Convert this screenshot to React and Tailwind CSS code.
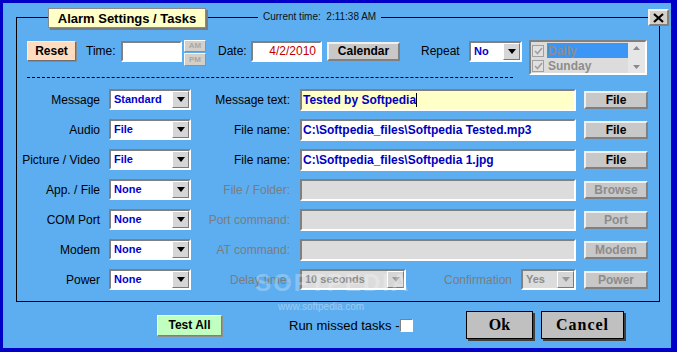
import React from "react";

const sunken =
  "border-2 border-t-[#808080] border-l-[#808080] border-b-white border-r-white";
const raised =
  "border-2 border-t-[#f0f0f0] border-l-[#f0f0f0] border-b-[#808080] border-r-[#808080]";

const Arrow = ({ dim }) => (
  <div className="w-[17px] h-full bg-[#d6d6d6] border border-t-white border-l-white border-b-[#7a7a7a] border-r-[#7a7a7a] flex items-center justify-center">
    <svg width="8" height="5" viewBox="0 0 8 5">
      <polygon points="0,0 8,0 4,5" fill={dim ? "#9a9a9a" : "#000"} />
    </svg>
  </div>
);

const Sel = ({ w, value, dim }) => (
  <div
    className={`${w} h-[21px] flex items-center ${sunken} ${
      dim ? "bg-[#dcdcdc]" : "bg-white"
    }`}
  >
    <span
      className={`flex-1 pl-[3px] text-[11px] font-bold leading-none ${
        dim ? "text-[#8c8c8c]" : "text-[#0000d0]"
      }`}
    >
      {value}
    </span>
    <Arrow dim={dim} />
  </div>
);

const Btn = ({ label, dim }) => (
  <div
    className={`w-[64px] h-[18px] ml-[8px] bg-[#c8c8c8] ${raised} flex items-center justify-center text-[12px] font-bold leading-none ${
      dim ? "text-[#8c8c8c]" : "text-black"
    }`}
  >
    {label}
  </div>
);

const Field = ({ value, yellow, dim }) => (
  <div
    className={`w-[276px] h-[22px] ml-[10px] ${sunken} flex items-center ${
      yellow ? "bg-[#ffffc8]" : dim ? "bg-[#dcdcdc]" : "bg-white"
    }`}
  >
    <span className="pl-[1px] text-[12px] font-bold text-[#0000c0] leading-none">
      {value}
    </span>
    {yellow && <span className="w-px h-[14px] bg-black" />}
  </div>
);

const rows = [
  { label: "Message", sel: "Standard", right: "Message text:", value: "Tested by Softpedia", yellow: true, btn: "File" },
  { label: "Audio", sel: "File", right: "File name:", value: "C:\\Softpedia_files\\Softpedia Tested.mp3", btn: "File" },
  { label: "Picture / Video", sel: "File", right: "File name:", value: "C:\\Softpedia_files\\Softpedia 1.jpg", btn: "File" },
  { label: "App. / File", sel: "None", right: "File / Folder:", dim: true, btn: "Browse" },
  { label: "COM Port", sel: "None", right: "Port command:", dim: true, btn: "Port" },
  { label: "Modem", sel: "None", right: "AT command:", dim: true, btn: "Modem" },
];

export default function App() {
  return (
    <div className="w-[677px] h-[352px] bg-[#0000c8] pt-[3px] pl-[3px] pr-[6px] pb-[4px] font-['Liberation_Sans',Arial,sans-serif] text-black">
      <div className="h-full bg-[#5daef0] pl-[13px] pt-[14px] relative">
        <div className="w-[644px] h-[285px] border border-black relative">
          {/* title */}
          <div className="absolute left-[31px] top-[-10px] w-[158px] h-[20px] bg-[#ffffc8] border border-[#8a8a8a] shadow-[2px_2px_0_#7a7a7a] flex items-center justify-center text-[13px] font-bold leading-none">
            Alarm Settings / Tasks
          </div>
          <div className="absolute left-[241px] top-[-7px] px-[5px] bg-[#5daef0] text-[10px] leading-[12px] text-[#101010]">
            Current time:&nbsp; 2:11:38 AM
          </div>
          <div className={`absolute left-[631px] top-[-9px] w-[21px] h-[17px] bg-[#d4d0c8] ${raised} flex items-center justify-center`}>
            <svg width="11" height="10" viewBox="0 0 11 10">
              <path d="M1 1 L10 9 M10 1 L1 9" stroke="#000" strokeWidth="2.2" />
            </svg>
          </div>

          {/* top row */}
          <div className="pt-[22px]">
            <div className="h-[22px] flex items-center pl-[10px] text-[12px]">
              <div className="w-[49px] h-[20px] bg-[#ffdcc0] border border-t-[#f8f0e8] border-l-[#f8f0e8] border-b-[#707070] border-r-[#707070] shadow-[1px_1px_0_#8a8a8a] flex items-center justify-center font-bold leading-none">
                Reset
              </div>
              <span className="w-[35px] ml-[10px]">Time:</span>
              <div className={`w-[61px] h-[21px] bg-white ${sunken}`} />
              <div className="ml-[2px] w-[22px] self-start flex flex-col gap-[1px]">
                <div className="h-[12px] bg-[#d4d0c8] border border-t-white border-l-white border-b-[#909090] border-r-[#909090] flex items-center justify-center text-[8px] font-bold text-[#a8a8a8] leading-none">
                  AM
                </div>
                <div className="h-[13px] bg-[#d4d0c8] border border-t-white border-l-white border-b-[#909090] border-r-[#909090] flex items-center justify-center text-[8px] font-bold text-[#a8a8a8] leading-none">
                  PM
                </div>
              </div>
              <span className="w-[33px] ml-[12px]">Date:</span>
              <div className={`w-[71px] h-[21px] bg-white ${sunken} flex items-center justify-end pr-[4px] text-[12px] text-[#c00000] leading-none`}>
                4/2/2010
              </div>
              <div className={`w-[73px] h-[19px] ml-[5px] bg-[#c8c8c8] ${raised} flex items-center justify-center font-bold leading-none`}>
                Calendar
              </div>
              <span className="w-[48px] ml-[21px]">Repeat</span>
              <Sel w="w-[53px]" value="No" />
              <div className={`ml-[7px] w-[118px] h-[35px] self-start bg-[#dcdcdc] ${sunken} flex`}>
                <div className="flex-1 flex flex-col pt-[1px]">
                  {["Daily", "Sunday"].map((d, i) => (
                    <div key={d} className="h-[15px] flex items-center">
                      <div className="w-[12px] h-[12px] ml-[1px] border border-[#a0a0a0] bg-[#e0e0e0] flex items-center justify-center">
                        <svg width="9" height="8" viewBox="0 0 9 8">
                          <path d="M1 4 L3.5 6.5 L8 1" stroke="#a0a0a0" strokeWidth="1.6" fill="none" />
                        </svg>
                      </div>
                      <span
                        className={`ml-[3px] flex-1 h-full flex items-center pl-[1px] font-bold text-[12px] text-[#8c8c8c] leading-none ${
                          i === 0 ? "bg-[#3c96f5]" : ""
                        }`}
                      >
                        {d}
                      </span>
                    </div>
                  ))}
                </div>
                <div className="w-[17px] bg-[#e6e6e6] flex flex-col justify-between items-center py-[4px]">
                  <svg width="7" height="4" viewBox="0 0 7 4">
                    <polygon points="0,4 7,4 3.5,0" fill="#8a8a8a" />
                  </svg>
                  <svg width="7" height="4" viewBox="0 0 7 4">
                    <polygon points="0,0 7,0 3.5,4" fill="#8a8a8a" />
                  </svg>
                </div>
              </div>
            </div>
          </div>

          <div className="mt-[15px] ml-[10px] w-[486px] border-t border-dashed border-black" />

          {/* task rows */}
          <div className="mt-[11px] flex flex-col gap-[9px] text-[12px]">
            {rows.map((r) => (
              <div key={r.label} className="h-[21px] flex items-center">
                <span className="w-[83px] text-right">{r.label}</span>
                <div className="ml-[9px]">
                  <Sel w="w-[82px]" value={r.sel} />
                </div>
                <span className={`w-[99px] text-right ${r.dim ? "text-[#7c7c7c]" : ""}`}>
                  {r.right}
                </span>
                <Field value={r.value} yellow={r.yellow} dim={r.dim} />
                <Btn label={r.btn} dim={r.dim} />
              </div>
            ))}
            <div className="h-[21px] flex items-center">
              <span className="w-[83px] text-right">Power</span>
              <div className="ml-[9px]">
                <Sel w="w-[82px]" value="None" />
              </div>
              <span className="w-[99px] text-right text-[#7c7c7c]">Delay time:</span>
              <div className="w-[276px] ml-[10px] flex items-center">
                <Sel w="w-[106px]" value="10 seconds" dim />
                <span className="flex-1 text-right text-[#7c7c7c] pr-[9px]">Confirmation</span>
                <Sel w="w-[55px]" value="Yes" dim />
              </div>
              <Btn label="Power" dim />
            </div>
          </div>
        </div>

        {/* bottom row */}
        <div className="mt-[9px] h-[28px] flex items-center ml-[141px]">
          <div className="w-[65px] h-[21px] bg-[#c0ffc0] border border-t-white border-l-white border-b-[#808080] border-r-[#808080] shadow-[1px_1px_0_#909090] flex items-center justify-center text-[12px] font-bold leading-none">
            Test All
          </div>
          <span className="ml-[67px] w-[111px] text-[13px] leading-none">Run missed tasks -</span>
          <div className="w-[13px] h-[13px] bg-white border border-t-[#808080] border-l-[#808080] border-b-white border-r-white" />
          <div className="ml-[53px] w-[67px] h-[28px] bg-[#c0c0c0] border border-black shadow-[2px_2px_0_#404040] flex items-center justify-center font-['Liberation_Serif',serif] font-bold text-[16px] leading-none">
            Ok
          </div>
          <div className="ml-[8px] w-[83px] h-[28px] bg-[#c0c0c0] border border-black shadow-[2px_2px_0_#404040] flex items-center justify-center font-['Liberation_Serif',serif] font-bold text-[16px] tracking-[1px] leading-none">
            Cancel
          </div>
        </div>

        {/* watermark */}
        <div className="absolute left-[252px] top-[268px] text-[24px] font-bold tracking-[2px] text-white opacity-25 leading-none pointer-events-none">
          SOFTPEDIA
        </div>
        <div className="absolute left-[275px] top-[299px] text-[10px] text-[#9ccbf2] leading-none pointer-events-none">
          www.softpedia.com
        </div>
      </div>
    </div>
  );
}
